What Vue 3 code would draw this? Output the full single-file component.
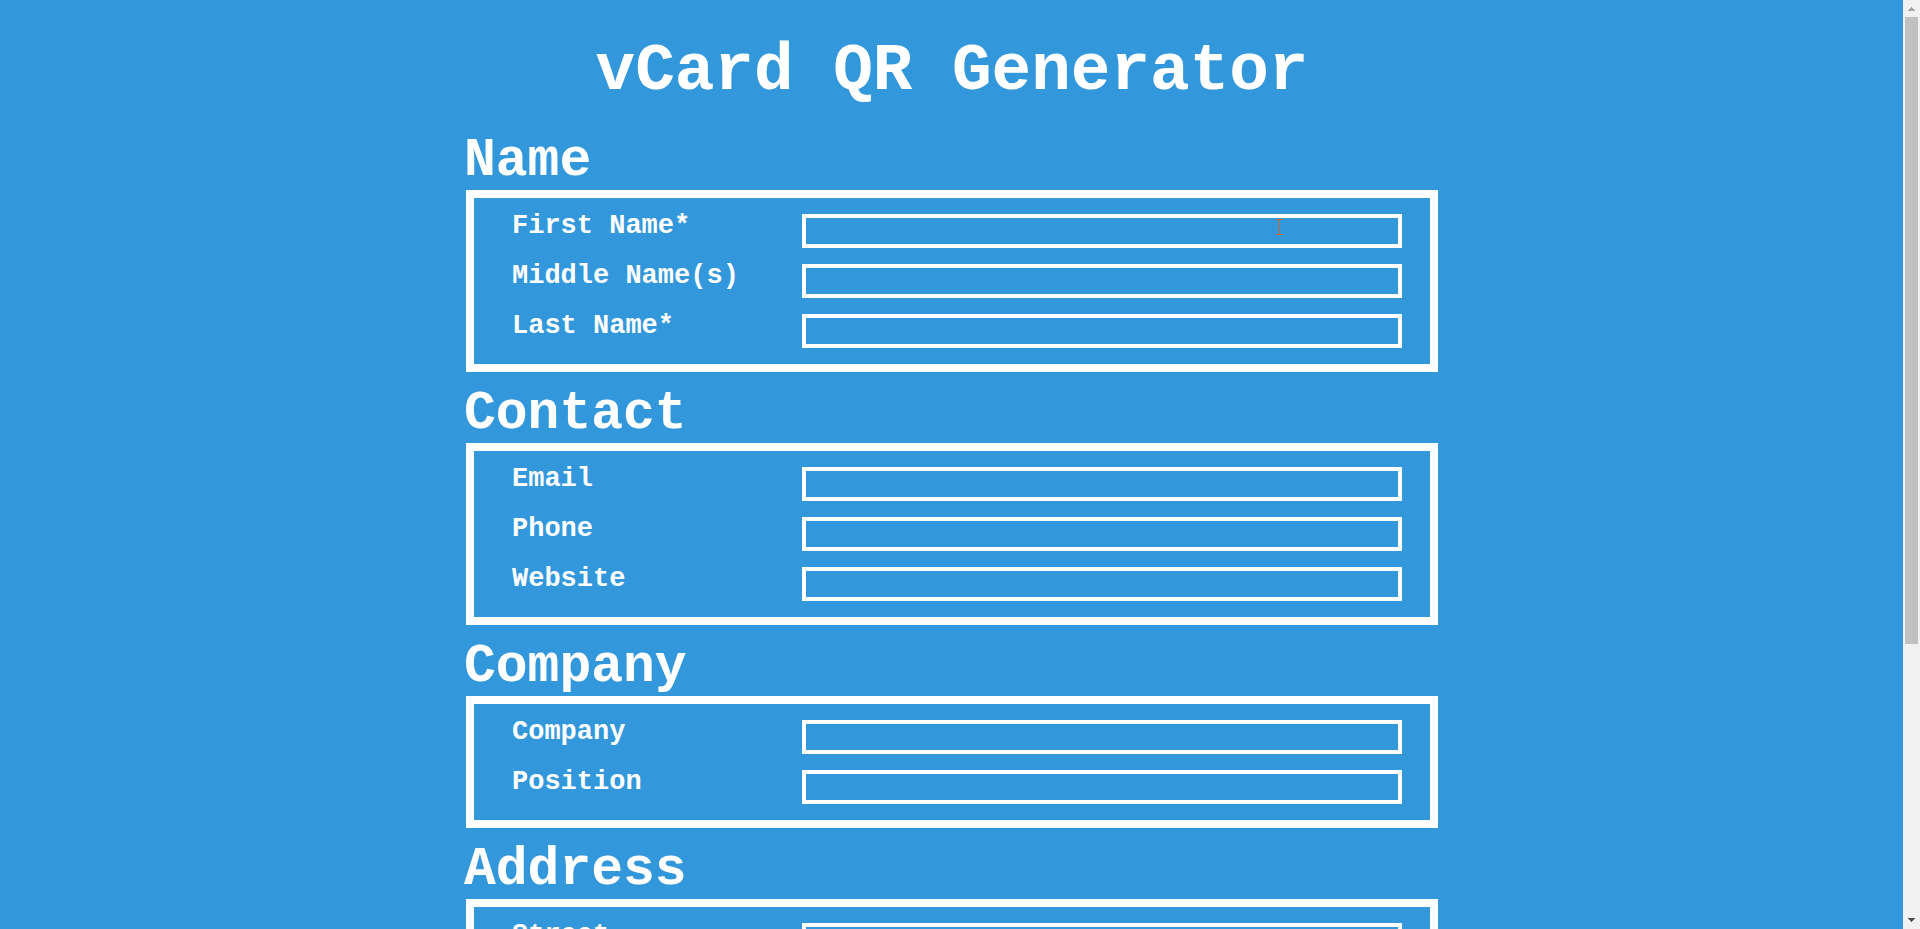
<script setup>
const sections = [
  { title: 'Name', fields: ['First Name*', 'Middle Name(s)', 'Last Name*'] },
  { title: 'Contact', fields: ['Email', 'Phone', 'Website'] },
  { title: 'Company', fields: ['Company', 'Position'] },
  { title: 'Address', fields: ['Street'] },
]
const fieldId = (section, field) =>
  `${section}-${field}`.toLowerCase().replace(/[^a-z]+/g, '-')
</script>

<template>
  <div class="window">
    <main class="page">
      <h1>vCard QR Generator</h1>
      <form class="card-form" @submit.prevent>
        <section v-for="s in sections" :key="s.title">
          <h2>{{ s.title }}</h2>
          <div class="panel">
            <div v-for="f in s.fields" :key="f" class="row">
              <label :for="fieldId(s.title, f)">{{ f }}</label>
              <div class="field">
                <input :id="fieldId(s.title, f)" type="text" />
                <svg
                  v-if="f === 'First Name*'"
                  class="ibeam"
                  width="7"
                  height="16"
                  viewBox="0 0 7 16"
                  shape-rendering="crispEdges"
                  aria-hidden="true"
                >
                  <path d="M0 0h7v1H4v14h3v1H0v-1h3V1H0z" />
                </svg>
              </div>
            </div>
          </div>
        </section>
      </form>
    </main>
    <div class="scrollbar" aria-hidden="true">
      <svg class="up" width="17" height="17" viewBox="0 0 17 17" shape-rendering="crispEdges">
        <path d="M8 7h1v1h1v1h1v1h1v1H5v-1h1V9h1V8h1z" />
      </svg>
      <div class="track"><div class="thumb"></div></div>
      <svg class="down" width="17" height="17" viewBox="0 0 17 17" shape-rendering="crispEdges">
        <path d="M5 6h7v1h-1v1h-1v1H9v1H8V9H7V8H6V7H5z" />
      </svg>
    </div>
  </div>
</template>

<style>
body {
  margin: 0;
  background: #3298db;
}
</style>

<style scoped>
.window {
  display: flex;
  height: 100vh;
  overflow: hidden;
  background: #3298db;
  color: #fff;
  font-family: 'Liberation Mono', 'Courier New', monospace;
  font-weight: bold;
}
.page {
  flex: 1;
  min-width: 0;
  padding-left: 1px;
  overflow-y: auto;
  scrollbar-width: none;
}
h1 {
  margin: 0;
  padding: 34px 0 9px;
  font-size: 66px;
  line-height: 76px;
  text-align: center;
}
.card-form {
  max-width: 972px;
  margin: 0 auto;
}
h2 {
  margin: 0 0 0 -2px;
  padding-top: 14px;
  font-size: 53px;
  line-height: 57px;
}
.panel {
  display: flex;
  flex-direction: column;
  gap: 16px;
  padding: 16px 28px 16px 38px;
  border: 8px solid #fff;
}
.row {
  display: flex;
  align-items: flex-start;
}
label {
  flex: 1;
  font-size: 27px;
  line-height: 24px;
}
.field {
  position: relative;
  flex: 0 1 600px;
}
input {
  display: block;
  box-sizing: border-box;
  width: 100%;
  height: 34px;
  padding: 0 8px;
  border: 4px solid #fff;
  border-radius: 0;
  outline: none;
  background: transparent;
  color: #fff;
  font: inherit;
  font-size: 20px;
}
.ibeam {
  position: absolute;
  top: 5px;
  left: 79%;
  fill: #cd6724;
  pointer-events: none;
}
.scrollbar {
  display: flex;
  flex: 0 0 17px;
  flex-direction: column;
  background: #f1f1f1;
}
.scrollbar svg {
  display: block;
}
.up {
  fill: #a3a3a3;
}
.down {
  fill: #505050;
}
.track {
  flex: 1;
  padding: 0 2px;
}
.thumb {
  height: 70%;
  background: #c1c1c1;
}
</style>
